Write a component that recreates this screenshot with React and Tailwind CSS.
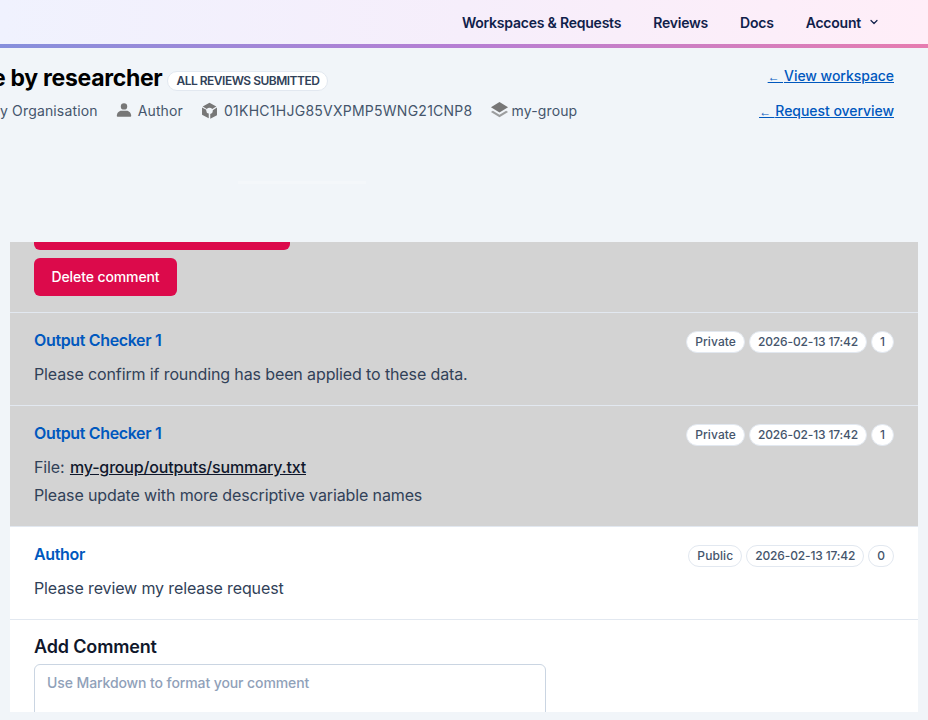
import { ChevronDown } from 'lucide-react';

// Icons
const UserIcon = () => (
  <svg width="16" height="16" viewBox="0 0 20 20" fill="currentColor"><path d="M10 9.500a4 4 0 1 0 0-8 4 4 0 0 0 0 8Z"/><path d="M1 17.500c0-3.600 2.600-6.500 5.800-6.500h6.400c3.200 0 5.800 2.900 5.800 6.500 0 .6-.4 1-1 1H2c-.6 0-1-.4-1-1Z"/></svg>
);

const CubeIcon = () => (
  <svg width="17" height="17" viewBox="0 0 20 20" fill="currentColor"><path d="M10 .8 2 5.200l4.800 2.900A4.500 4.500 0 0 1 10 6.800c1.300 0 2.400.5 3.200 1.300L18 5.200 10 .8Z"/><path d="M1.200 6.600v8.300l7.900 4.300v-5.600a3.700 3.700 0 0 1-3-3.600c0-.4 0-.7.100-1L1.200 6.600Z"/><path d="M18.800 6.600l-5 3c.1.300.1.600.1 1a3.700 3.700 0 0 1-3 3.600v5.600l7.900-4.300V6.600Z"/></svg>
);

const LayersIcon = () => (
  <svg width="19" height="19" viewBox="0 0 20 20" fill="currentColor"><path d="M10 1 1 6.500 10 12l9-5.500L10 1Z"/><path d="M3 10.200 1 11.500 10 17l9-5.500-2-1.300-7 4.200-7-4.200Z" opacity="0.7"/></svg>
);

const Pill = ({ children, className = '' }) => (
  <span className={`rounded-full bg-white border border-slate-200 px-2 text-[12px] leading-[20px] font-medium text-slate-600 ${className}`}>
    {children}
  </span>
);

const BackLink = ({ children }) => (
  <a><span className="font-['Liberation_Sans'] text-[12px] pr-px">← </span>{children}</a>
);

const Comment = ({ author, visibility, index, grey, children }) => (
  <div className={`px-6 pt-4 pb-[17px] border-b border-slate-200 ${grey ? 'bg-[#d3d3d3]' : 'bg-white'}`}>
    <div className="flex items-center justify-between h-[24px]">
      <a className="-mt-[2px] text-[16px] font-semibold tracking-[-0.35px] text-[#0058be]">{author}</a>
      <div className="flex items-center gap-1 mt-[2px]">
        <Pill className="tracking-[0.1px]">{visibility}</Pill>
        <Pill className="tracking-[-0.15px]">2026-02-13 17:42</Pill>
        <Pill>{index}</Pill>
      </div>
    </div>
    <div className="mt-[7px] text-[16px] leading-[28px] tracking-[-0.12px] text-slate-700">{children}</div>
  </div>
);

export default function App() {
  return (
    <div className="h-[720px] w-[928px] overflow-hidden bg-slate-100 flex flex-col font-['Inter','Liberation_Sans',sans-serif]">
      {/* Nav */}
      <header className="shrink-0">
        <div className="h-[44px] bg-gradient-to-r from-[#f0f2fe] via-[#f6eefb] to-[#ffeef8] flex items-center justify-end pr-[48px] gap-8 text-[14px] font-semibold tracking-[-0.22px] text-[#10214a]">
          <a>Workspaces &amp; Requests</a>
          <a>Reviews</a>
          <a>Docs</a>
          <a className="flex items-center gap-[7px]">Account <ChevronDown size={12} strokeWidth={2.4} /></a>
        </div>
        <div className="h-[4px] bg-gradient-to-r from-[#868fdc] via-[#b67ed3] to-[#e67cb0]" />
      </header>

      {/* Request header */}
      <section className="h-[194px] shrink-0 bg-slate-100 pr-[34px] pt-[16px] flex justify-between">
        <div className="flex flex-col -ml-[8px]">
          <div className="flex items-center gap-[5px] h-[28px]">
            <h1 className="text-[23px] font-bold tracking-[-0.3px] text-black whitespace-nowrap">e by researcher</h1>
            <span className="rounded-full bg-white border border-slate-200 px-[8px] text-[12px] leading-[18px] font-semibold tracking-[-0.5px] text-slate-700 whitespace-nowrap mt-[6px]">ALL REVIEWS SUBMITTED</span>
          </div>
          <div className="flex items-center gap-[18px] mt-[6px] text-[14px] tracking-[0.15px] text-slate-600 ml-[8px] whitespace-nowrap h-[24px]">
            <span>y Organisation</span>
            <span className="flex items-center gap-[6px]"><span className="text-[#777]"><UserIcon /></span>Author</span>
            <span className="flex items-center gap-[6px]"><span className="text-[#777]"><CubeIcon /></span><span className="tracking-[0.25px]">01KHC1HJG85VXPMP5WNG21CNP8</span></span>
            <span className="flex items-center gap-[2px]"><span className="text-[#777]"><LayersIcon /></span>my-group</span>
          </div>
          <div className="mt-[59px] ml-[246px] w-[128px] h-[3px] bg-white/25" />
        </div>
        <div className="flex flex-col items-end gap-[14px] pt-[1px] text-[14px] font-medium tracking-[-0.05px] text-[#0058be] underline">
          <BackLink>View workspace</BackLink>
          <BackLink>Request overview</BackLink>
        </div>
      </section>

      {/* Comments */}
      <main className="flex-1 min-h-0 mx-[10px] bg-white overflow-hidden">
        <div className="bg-[#d3d3d3] px-6 h-[71px] border-b border-slate-200">
          <div className="w-[256px] h-[8px] bg-[#dc0a4b] rounded-b-md" />
          <button className="mt-[8px] h-[38px] w-[143px] pb-[2px] rounded-md bg-[#dc0a4b] text-[14px] font-medium tracking-[-0.1px] text-white">Delete comment</button>
        </div>
        <Comment author="Output Checker 1" visibility="Private" index="1" grey>
          Please confirm if rounding has been applied to these data.
        </Comment>
        <Comment author="Output Checker 1" visibility="Private" index="1" grey>
          <p>File: <a className="ml-px font-medium tracking-[-0.16px] text-slate-900 underline">my-group/outputs/summary.txt</a></p>
          <p>Please update with more descriptive variable names</p>
        </Comment>
        <Comment author="Author" visibility="Public" index="0">
          Please review my release request
        </Comment>
        <div className="px-6 pt-[15px]">
          <h2 className="text-[18px] leading-[24px] font-semibold tracking-[-0.15px] text-slate-900">Add Comment</h2>
          <div className="mt-[5px] w-[512px] h-[80px] rounded-md border border-slate-300 px-3 py-[9px] text-[14px] leading-[18px] font-medium tracking-[-0.1px] text-slate-400">
            Use Markdown to format your comment
          </div>
        </div>
      </main>
      <div className="h-[8px] shrink-0 bg-slate-100" />
    </div>
  );
}
